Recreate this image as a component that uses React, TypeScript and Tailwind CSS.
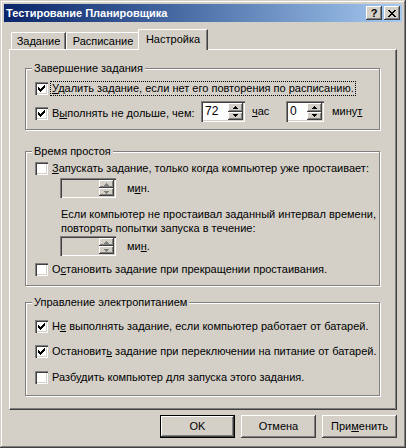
import type { ReactNode } from 'react';

const raised = 'shadow-[inset_-1px_-1px_0_#404040,inset_1px_1px_0_#fff,inset_-2px_-2px_0_#808080]';
const sunken = 'shadow-[inset_1px_1px_0_#808080,inset_2px_2px_0_#404040,inset_-1px_-1px_0_#fff,inset_-2px_-2px_0_#d4d0c8]';

const CheckBox = ({ checked }: { checked?: boolean }) => (
  <span className={`relative w-[13px] h-[13px] shrink-0 bg-white ${sunken}`}>
    {checked && (
      <svg width="7" height="7" viewBox="0 0 7 7" className="absolute left-[3px] top-[3px]" shapeRendering="crispEdges">
        <path d="M6 0h1v3h-1v1h-1v1h-1v1h-1v1h-1v-1h-1v-1h-1v-3h1v1h1v1h1v-1h1v-1h1z" fill="#000" />
      </svg>
    )}
  </span>
);

const Arrow = ({ up, off }: { up?: boolean; off?: boolean }) => (
  <svg width="5" height="3" viewBox="0 0 5 3" shapeRendering="crispEdges">
    <path d={up ? 'M2 0h1v1h1v1h1v1h-5v-1h1v-1h1z' : 'M0 0h5v1h-1v1h-1v1h-1v-1h-1v-1h-1z'} fill={off ? '#808080' : '#000'} />
  </svg>
);

const Spin = ({ value, w, off }: { value?: string; w: string; off?: boolean }) => (
  <div className={`flex ${w} ${off ? 'h-[20px] bg-[#d4d0c8]' : 'h-[21px] bg-white'} p-[2px] ${sunken}`}>
    <span className="flex-1 pl-[2px] leading-[16px] text-[12px]">{value}</span>
    <div className="flex flex-col w-[15px]">
      <span className={`flex-1 flex items-center justify-center bg-[#d4d0c8] ${raised}`}><Arrow up off={off} /></span>
      <span className={`flex-1 flex items-center justify-center bg-[#d4d0c8] ${raised}`}><Arrow off={off} /></span>
    </div>
  </div>
);

const Row = ({ checked, children, focus }: { checked?: boolean; children: ReactNode; focus?: boolean }) => (
  <div className="flex items-center h-[15px] pl-[9px] gap-[2px]">
    <CheckBox checked={checked} />
    <span className={`px-[1px] leading-[13px] border border-dotted ${focus ? 'border-black' : 'border-transparent'}`}>{children}</span>
  </div>
);

const Group = ({ title, className, children }: { title: string; className: string; children: ReactNode }) => (
  <div className={`relative w-[355px] border border-[#808080] shadow-[1px_1px_0_#fff,inset_1px_1px_0_#fff] ${className}`}>
    <span className="absolute left-[6px] top-[-7px] px-[2px] bg-[#d4d0c8] leading-[13px]">{title}</span>
    {children}
  </div>
);

const Btn = ({ children, def }: { children: ReactNode; def?: boolean }) => (
  <button
    className={`w-[75px] h-[23px] bg-[#d4d0c8] flex items-center justify-center ${
      def
        ? 'shadow-[inset_0_0_0_1px_#000,inset_-2px_-2px_0_#404040,inset_2px_2px_0_#fff,inset_-3px_-3px_0_#808080]'
        : raised
    }`}
  >
    {children}
  </button>
);

export default function App() {
  return (
    <div className="w-[406px] h-[448px] bg-[#d4d0c8] p-[4px] text-[11px] text-black font-['Liberation_Sans',Arial,sans-serif] shadow-[inset_-1px_-1px_0_#404040,inset_1px_1px_0_#d4d0c8,inset_-2px_-2px_0_#808080,inset_2px_2px_0_#fff]">
      {/* title bar */}
      <div className="h-[18px] flex items-center pl-[2px] pr-[2px] bg-linear-to-r from-[#0a246a] to-[#a6caf0]">
        <span className="flex-1 text-white font-bold leading-[14px]">Тестирование Планировщика</span>
        <span className={`w-[16px] h-[14px] flex items-center justify-center bg-[#d4d0c8] font-bold text-[11px] leading-[12px] ${raised}`}>?</span>
        <span className={`ml-[2px] w-[16px] h-[14px] flex items-center justify-center bg-[#d4d0c8] ${raised}`}>
          <svg width="8" height="7" viewBox="0 0 8 7" shapeRendering="crispEdges">
            <path d="M0 0h2l2 2.5 2-2.5h2l-3 3.5 3 3.5h-2l-2-2.5-2 2.5h-2l3-3.5z" fill="#000" />
          </svg>
        </span>
      </div>

      <div className="px-[5px] pt-[7px]">
        {/* tabs */}
        <div className="relative z-10 flex items-end h-[21px] -mb-[1px] pl-[2px]">
          <span className="w-[55px] h-[17px] mb-[1px] flex items-center justify-center border-l border-t border-white rounded-tl-[2px] border-r border-r-[#404040] shadow-[inset_-1px_0_0_#808080]">Задание</span>
          <span className="w-[74px] h-[17px] mb-[1px] flex items-center justify-center border-l border-t border-white rounded-tl-[2px] border-r border-r-[#404040] shadow-[inset_-1px_0_0_#808080]">Расписание</span>
          <span className="-ml-[2px] w-[70px] h-[21px] pb-[2px] flex items-center justify-center bg-[#d4d0c8] border-l border-t border-white rounded-tl-[2px] border-r border-r-[#404040] shadow-[inset_-1px_0_0_#808080]">Настройка</span>
        </div>

        {/* panel */}
        <div className="h-[361px] border-l border-t border-white border-r border-b border-r-[#404040] border-b-[#404040] shadow-[inset_-1px_-1px_0_#808080] pl-[15px] pt-[18px]">
          <Group title="Завершение задания" className="pt-[12px] pb-[7px]">
            <Row checked focus><u>У</u>далить задание, если нет его повторения по расписанию.</Row>
            <div className="flex items-center h-[21px] mt-[5px]">
              <div className="w-[175px] pt-[3px]">
                <Row checked>В<u>ы</u>полнять не дольше, чем:</Row>
              </div>
              <Spin value="72" w="w-[44px]" />
              <span className="ml-[7px] w-[34px]"><u>ч</u>ас</span>
              <Spin value="0" w="w-[38px]" />
              <span className="ml-[8px]">мину<u>т</u></span>
            </div>
          </Group>

          <Group title="Время простоя" className="mt-[21px] pt-[9px] pb-[8px]">
            <Row><u>З</u>апускать задание, только когда компьютер уже простаивает:</Row>
            <div className="flex items-center mt-[2px] pl-[34px]">
              <Spin w="w-[56px]" off />
              <span className="ml-[11px]">м<u>и</u>н.</span>
            </div>
            <p className="mt-[9px] pl-[35px] leading-[14px]">
              Если компьютер не простаивал заданный интервал времени,<br />
              повторять попытки запуска в течение:
            </p>
            <div className="flex items-center mt-[1px] pl-[34px]">
              <Spin w="w-[56px]" off />
              <span className="ml-[11px]">ми<u>н</u>.</span>
            </div>
            <div className="mt-[6px]">
              <Row>О<u>с</u>тановить задание при прекращении простаивания.</Row>
            </div>
          </Group>

          <Group title="Управление электропитанием" className="mt-[16px] pt-[16px] pb-[10px]">
            <Row checked>Н<u>е</u> выполнять задание, если компьютер работает от батарей.</Row>
            <div className="mt-[10px]">
              <Row checked>Остановит<u>ь</u> задание при переключении на питание от батарей.</Row>
            </div>
            <div className="mt-[11px]">
              <Row>Разб<u>у</u>дить компьютер для запуска этого задания.</Row>
            </div>
          </Group>
        </div>

        {/* buttons */}
        <div className="flex justify-end gap-[6px] mt-[5px]">
          <Btn def>OK</Btn>
          <Btn>Отмена</Btn>
          <Btn>При<u>м</u>енить</Btn>
        </div>
      </div>
    </div>
  );
}
